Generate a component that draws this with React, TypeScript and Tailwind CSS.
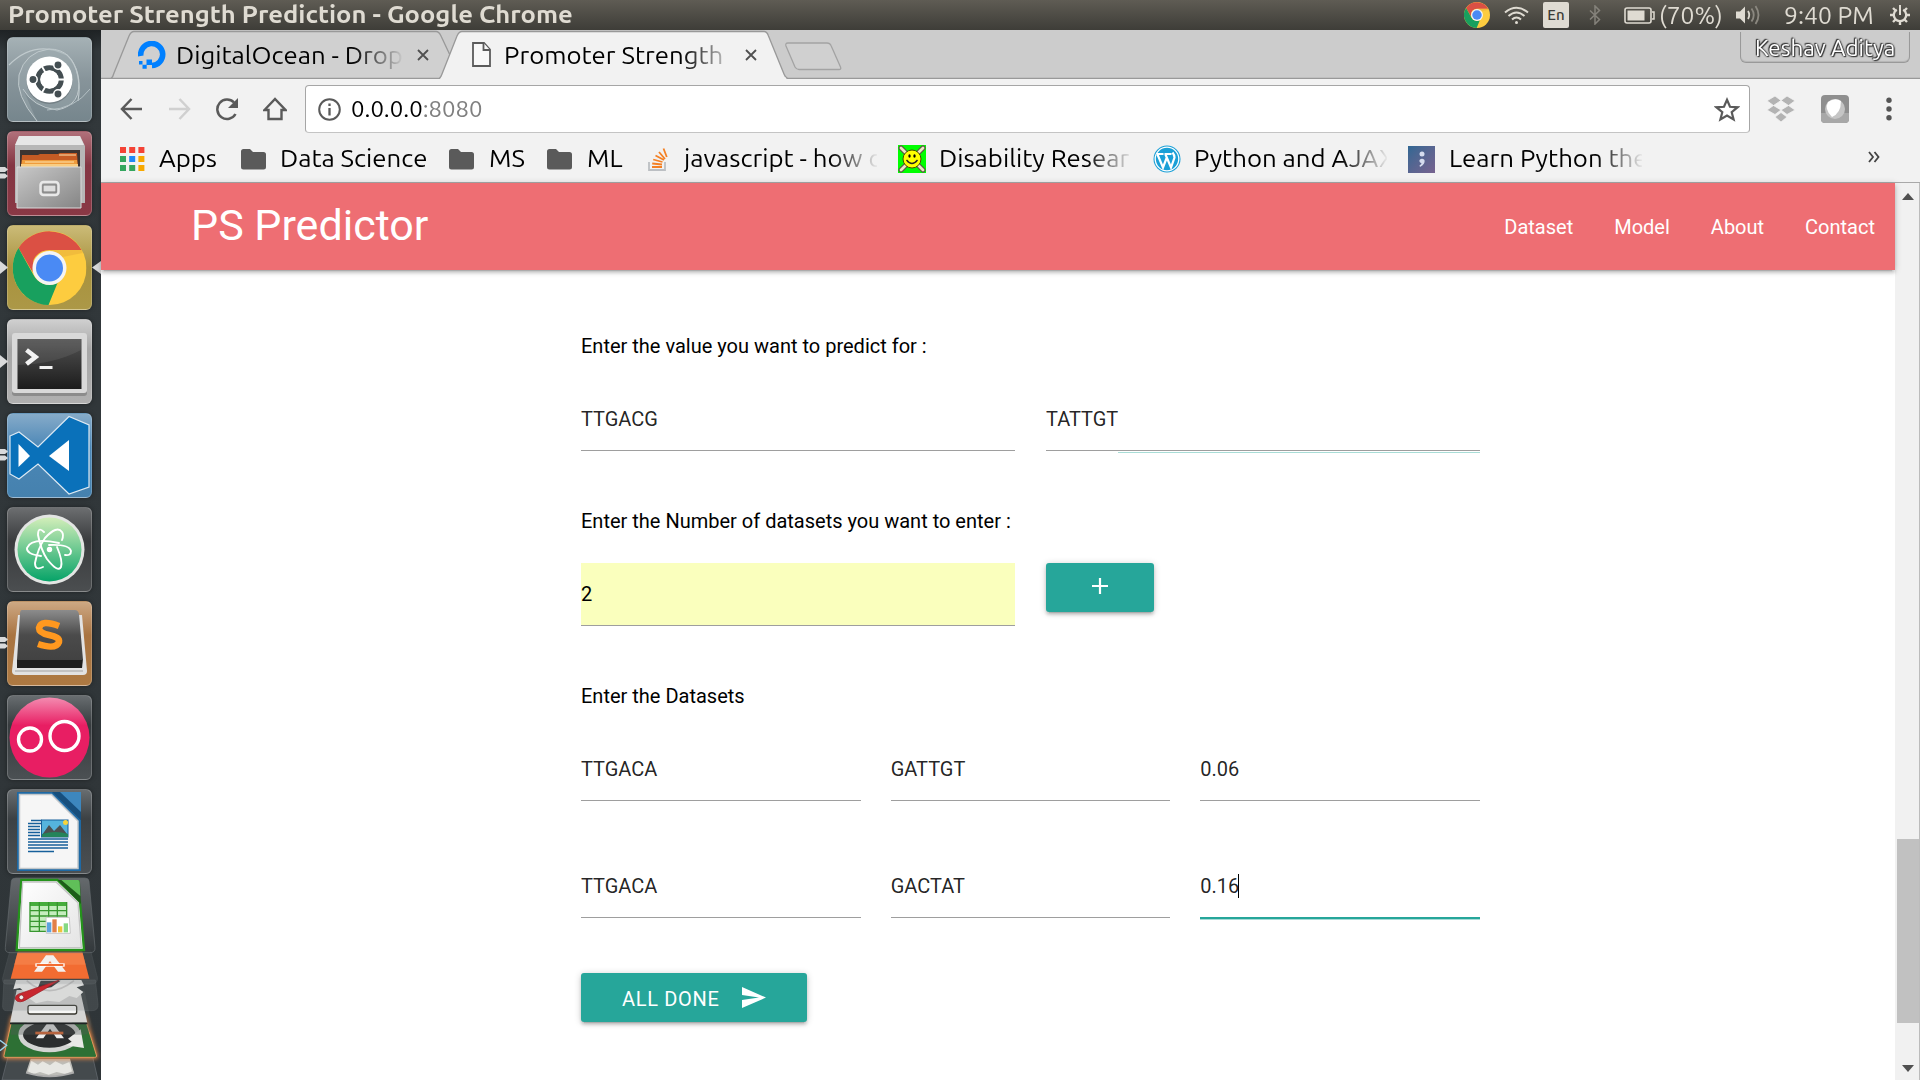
import React from "react";

const UI = "font-['Ubuntu','Noto_Sans',sans-serif]";

function Label({ children, className = "" }: { children: React.ReactNode; className?: string }) {
  return (
    <span className={`block w-max origin-left whitespace-nowrap text-black ${className}`}>{children}</span>
  );
}

function ChromeMark({ size, className = "" }: { size: number; className?: string }) {
  return (
    <svg width={size} height={size} viewBox="0 0 74 74" className={className}>
      <circle cx="37" cy="37" r="37" fill="#fdcc3f" />
      <path d="M6 17A37 37 0 0 1 69 19H37a18 18 0 0 0-16 10l-1 12Z" fill="#db5044" />
      <path d="M6 17 21 44a18 18 0 0 0 24 8L36 74A37 37 0 0 1 6 17Z" fill="#18a05e" />
      <path d="M37 19h32l1 3-20 4Z" fill="#e9b13a" opacity=".6" />
      <circle cx="37" cy="37" r="17" fill="#f4f4f4" />
      <circle cx="37" cy="37" r="13.5" fill="#4a8af4" />
    </svg>
  );
}

/* ---------- Desktop panel ---------- */

function Tray() {
  return (
    <div className="flex h-full items-center text-[#dfdbd2]">
      <ChromeMark size={26} />
      <svg width="25" height="19" viewBox="0 0 25 19" className="ml-[14px]" fill="none" stroke="#dfdbd2" strokeWidth="2">
        <path d="M1 6.500Q12.500-3 24 6.500M4.500 10Q12.500 3 20.500 10M8 13.500Q12.500 9.500 17 13.500" />
        <circle cx="12.500" cy="16.500" r="1.500" fill="#dfdbd2" stroke="none" />
      </svg>
      <span className="ml-[14px] flex h-[26px] w-[26px] items-center justify-center rounded-[2px] bg-[#dfdbd2] text-[15px] font-medium text-[#3c3b37]">
        En
      </span>
      <svg width="12" height="20" viewBox="0 0 12 20" className="ml-[20px]" fill="none" stroke="#85827b" strokeWidth="1.500">
        <path d="M1 5.500 10.500 14.500 6 19V1L10.500 5.500 1 14.500" />
      </svg>
      <svg width="31" height="17" viewBox="0 0 31 17" className="ml-[23px]">
        <rect x="1" y="1" width="26" height="15" rx="2" fill="none" stroke="#dfdbd2" strokeWidth="1.600" />
        <rect x="3.500" y="3.500" width="17" height="10" fill="#dfdbd2" />
        <path d="M28 5h2v7h-2" fill="none" stroke="#dfdbd2" strokeWidth="1.500" />
      </svg>
      <span className="ml-[4px] block w-[77px]">
        <span className="block w-max origin-left scale-x-[1.045] whitespace-nowrap text-[23.500px] leading-[30px]">(70%)</span>
      </span>
      <svg width="25" height="20" viewBox="0 0 25 20" fill="none" strokeWidth="1.800">
        <path d="M0 6.500h4l5-5v17l-5-5H0Z" fill="#dfdbd2" />
        <path d="M12 6q2.500 4 0 8" stroke="#dfdbd2" />
        <path d="M15.500 3.500q4.500 6.500 0 13M19.500 1q6 9 0 18" stroke="#8b8880" />
      </svg>
      <span className="ml-[23px] block w-[106px]">
        <span className="block w-max origin-left scale-x-[1.05] whitespace-nowrap text-[23.500px] leading-[30px]">9:40 PM</span>
      </span>
      <svg width="20" height="20" viewBox="0 0 20 20" className="mr-[10px]" fill="none" stroke="#dfdbd2">
        <path d="M6.800 4.700A6.200 6.200 0 1 0 13.200 4.700" strokeWidth="2.200" />
        <path d="M10 0v10" strokeWidth="2" />
        <path d="M3 3l2.500 2.500M17 3l-2.500 2.500M0 10h4M20 10h-4M3 17l2.500-2.500M17 17l-2.500-2.500M10 20v-4" strokeWidth="2.400" />
      </svg>
    </div>
  );
}

function Panel() {
  return (
    <header className={`flex h-[30px] shrink-0 items-center justify-between bg-linear-to-b from-[#5f5c54] to-[#3e3d38] ${UI}`}>
      <div className="pl-2">
        <span className="block w-max origin-left scale-x-[1.065] whitespace-nowrap text-[24px] leading-[30px] font-bold text-[#dfdbd2]">
          Promoter Strength Prediction - Google Chrome
        </span>
      </div>
      <Tray />
    </header>
  );
}

/* ---------- Launcher ---------- */

function Tile({ tint, pips = 0, active = false, children }: { tint: string; pips?: number; active?: boolean; children: React.ReactNode }) {
  return (
    <div className="relative flex h-[85px] w-[101px] shrink-0 pl-[7px]">
      {pips === 1 && (
        <svg className="absolute top-[36px] left-0" width="8" height="13" viewBox="0 0 8 13">
          <path d="M0 0v13l8-6.500Z" fill="#d9dadb" />
        </svg>
      )}
      {pips === 2 && (
        <svg className="absolute top-[36px] left-0" width="8" height="12" viewBox="0 0 8 12">
          <path d="M0 0h5l3 2.500L5 5H0ZM0 6.500h5L8 9l-3 2.500H0Z" fill="#d9dadb" />
        </svg>
      )}
      {active && (
        <svg className="absolute top-[36px] right-0" width="9" height="13" viewBox="0 0 9 13">
          <path d="M9 0v13L0 6.500Z" fill="#d9dadb" />
        </svg>
      )}
      <div className={`h-[85px] w-[85px] overflow-hidden rounded-[6px] border border-white/20 shadow-[0_0_5px_rgba(0,0,0,0.4)] ${tint}`}>
        <svg width="83" height="83" viewBox="1 1 83 83">{children}</svg>
      </div>
    </div>
  );
}

function FoldedTiles() {
  return (
    <svg width="101" height="203" viewBox="0 51 303 609" className="mt-[-6px] shrink-0">
      <defs>
        <linearGradient id="glass" x1="0" y1="0" x2="0" y2="1">
          <stop offset="0" stopColor="#777b7e" />
          <stop offset="1" stopColor="#34393c" />
        </linearGradient>
        <linearGradient id="sheet" x1="0" y1="0" x2="1" y2="1">
          <stop offset="0" stopColor="#fff" />
          <stop offset="1" stopColor="#e4e4e4" />
        </linearGradient>
        <filter id="glow" x="-20%" y="-40%" width="140%" height="180%">
          <feGaussianBlur stdDeviation="6" />
        </filter>
      </defs>
      <path d="M24 590 6 660H294L278 590Z" fill="#444a4d" stroke="#697075" strokeWidth="2" />
      <path d="M92 596h118l12 42q-70 22-144 0Z" fill="#bdbdb8" />
      <path d="M94 602l20 12 14-10 22 12 16-12 22 10 20-8 8 28-20 8-26-6-24 8-26-8-20 6-16-8Z" fill="#e7e7e3" />
      <path d="M78 638q70 22 144 0" stroke="#aaa" strokeWidth="5" fill="none" />
      <path d="M34 468h224l36 122q0 6-8 6H14q-6 0-6-6Z" fill="#f08b45" filter="url(#glow)" />
      <path d="M36 478h220l34 110q0 4-6 4H16q-6 0-4-6Z" fill="#2d7034" stroke="#e0955d" strokeWidth="3" />
      <ellipse cx="148" cy="524" rx="86" ry="46" fill="#2b2d2e" stroke="#d3d4d2" strokeWidth="14" />
      <path d="M242 508l10 56-54-8 18-10-12-10Z" fill="#e8e8e6" />
      <path d="M108 535 140 492h20l32 43h-22l-20-29-20 29Z" fill="#eee" />
      <path d="M106 515h84v8h-84Z" fill="#ed6a32" />
      <path d="M0 541 20 556 0 572" stroke="#9cd4ee" strokeWidth="4" fill="none" />
      <path d="M42 392h212l20 98q2 34-24 34H32Z" fill="#54585a" opacity=".35" />
      <path d="M50 390h190l22 98H30Z" fill="#d5d5d4" />
      <rect x="84" y="436" width="146" height="26" rx="6" fill="#f8f8f7" stroke="#37362f" strokeWidth="4" />
      <path d="M30 490h232" stroke="#202324" strokeWidth="5" />
      <path d="M12 360h274l8 72q2 20-18 20H20q-14 0-12-18Z" fill="#777d80" opacity=".25" stroke="#a5abae" strokeWidth="2" />
      <path d="M48 360h196l8 16-22 6 20 14-20 18-22-6-30 18-36-4-34 8-22-16-24 2 12-20-14-12-20 4Z" fill="#d9dad9" />
      <path d="M80 362q66 60 142 0" fill="none" stroke="#bbb" strokeWidth="5" />
      <path d="M122 362h60l-28 20-42 6Z" fill="#3c3f41" />
      <path d="M56 402 178 360 140 384 84 416q-28 18-38 2-2-10 10-16Z" fill="#c8272f" stroke="#9b1b22" strokeWidth="2" />
      <circle cx="64" cy="412" r="7" fill="#eee" stroke="#81151b" strokeWidth="2" />
      <path d="M30 272h242l20 80q2 20-18 20H20q-14 0-12-18Z" fill="#74797c" opacity=".2" stroke="#a5abae" strokeWidth="2" />
      <path d="M54 272h192l22 84H32Z" fill="#f26c32" />
      <path d="M54 272h192l11 42H43Z" fill="#f5854d" opacity=".7" />
      <path d="M102 335 138 286h22l38 49h-24l-24-32-24 32Z" fill="#f3efed" />
      <path d="M106 310h88v10h-88Z" fill="#fff" />
      <path d="M110 312h80v6h-80Z" fill="#f26c32" />
      <path d="M48 54h206q12 0 13 10l18 198q1 16-15 16H30q-16 0-14-16L34 64q1-10 14-10Z" fill="url(#glass)" opacity=".75" stroke="#777d80" strokeWidth="2" />
      <path d="M64 60h108l68 66 12 144H50Z" fill="#fafafa" stroke="#25931c" strokeWidth="7" />
      <path d="M68 66h100l66 62 10 135H58Z" fill="url(#sheet)" stroke="#c4c4c4" strokeWidth="4" />
      <path d="M172 60h62q6 0 6 6l3 66Z" fill="#1d5d19" />
      <path d="M184 60h50q5 0 5 6l2 42Z" fill="#60bf59" />
      <path d="M90 126h110v88H88Z" fill="#c5edbe" />
      <path d="M90 126h110v12H90Z" fill="#45ad3b" />
      <path d="M90 126v88M118 126v88M146 126v88M172 126v60M200 126v50M88 152h112M88 168h112M88 184h112M88 200h60M88 214h60" stroke="#37962f" strokeWidth="4" />
      <path d="M138 172h70l3 48h-72Z" fill="#fff" stroke="#c7c7c7" strokeWidth="3" />
      <path d="M141 187h13v30h-13Z" fill="#5ba4df" />
      <path d="M157 178h13v39h-13Z" fill="#e28048" />
      <path d="M174 199h13v18h-13Z" fill="#efc23a" />
      <path d="M191 190h13v27h-13Z" fill="#84d883" />
    </svg>
  );
}

function Launcher() {
  return (
    <aside className="flex w-[101px] shrink-0 flex-col gap-[9px] overflow-hidden bg-linear-to-b from-[#1e2224] via-[#32383b] via-[2%] to-[#2f3538] pt-[7px]">
      <Tile tint="bg-linear-to-b from-[#a5b1b5] via-[#87949a] to-[#76868d]">
        <path d="M2 28Q28 2 60 18 76 34 71 64" fill="none" stroke="#c0cacd" strokeWidth="1.200" />
        <path d="M30 84Q8 58 12 38 18 15 42 12 66 12 71 40 Q76 68 50 73 26 70 16 52" fill="#a0acb1" fillOpacity=".45" stroke="#c0cacd" strokeWidth="1" />
        <path d="M40 73Q68 72 83 52" fill="none" stroke="#b4c0c4" strokeWidth="1" />
        <circle cx="42.500" cy="44" r="23" fill="#59646a" opacity=".5" />
        <circle cx="42.500" cy="42.500" r="23" fill="#fff" />
        <circle cx="42.500" cy="42.500" r="11.800" fill="none" stroke="#444e52" strokeWidth="5" />
        <path d="M42.500 42.500H60M42.500 42.500 33.500 27M42.500 42.500 33.500 58" stroke="#fff" strokeWidth="1.800" />
        <circle cx="42.500" cy="42.500" r="9" fill="#fff" />
        <g fill="#444e52" stroke="#fff" strokeWidth="1.500">
          <circle cx="26" cy="42.500" r="4.200" />
          <circle cx="51" cy="28" r="4.200" />
          <circle cx="51" cy="57" r="4.200" />
        </g>
      </Tile>
      <Tile tint="bg-linear-to-b from-[#b0707a] via-[#843643] via-[40%] to-[#8a3845]" pips={2}>
        <defs>
          <linearGradient id="cab" x1="0" y1="0" x2="1" y2="1">
            <stop offset="0" stopColor="#c8c8c8" />
            <stop offset="1" stopColor="#858585" />
          </linearGradient>
        </defs>
        <path d="M12 5h61l5 10v57H8V15Z" fill="#b7b7b7" />
        <path d="M12 5h61l4 9H8Z" fill="#e7e7e7" />
        <path d="M13 19h60v20H13Z" fill="#3c3431" />
        <path d="M15 24h16l2-1h18l2-1h17l1 15H14Z" fill="#c55b24" />
        <path d="M15 29h55l1 10H14Z" fill="#ef9c3c" />
        <path d="M14 33h57v6H14Z" fill="#f8cd83" />
        <path d="M18 31h49M52 24h17" stroke="#ffe3ae" strokeWidth="1.200" />
        <path d="M10 36h64v41H10Z" fill="url(#cab)" stroke="#dadada" strokeWidth="1" />
        <rect x="33.500" y="51" width="18" height="13" rx="3" fill="none" stroke="#e9e9e9" strokeWidth="2.500" />
        <rect x="36" y="54" width="13" height="7" fill="#dedede" stroke="#777" />
      </Tile>
      <Tile tint="bg-linear-to-b from-[#cbbb77] via-[#a8923d] via-[50%] to-[#ac9847]" pips={1} active>
        <g transform="translate(5.500 6)">
          <ChromeMark size={74} />
        </g>
      </Tile>
      <Tile tint="bg-linear-to-b from-[#cfcfcf] via-[#a6a6a6] via-[35%] to-[#b0b0b0]" pips={1}>
        <defs>
          <linearGradient id="crt" x1="0" y1="0" x2="0" y2="1">
            <stop offset="0" stopColor="#525252" />
            <stop offset="1" stopColor="#1c1c1c" />
          </linearGradient>
        </defs>
        <rect x="5" y="16" width="75" height="61" rx="3" fill="#8c8c8c" />
        <rect x="5" y="14" width="75" height="60" rx="3" fill="#d9d9d9" />
        <rect x="10.500" y="20" width="64" height="50" fill="url(#crt)" />
        <path d="M11 20h63v11Q48 45 11 46Z" fill="#fff" opacity=".08" />
        <path d="M19.500 31 28.500 38 19.500 45" fill="none" stroke="#f2f2f2" strokeWidth="4.600" />
        <path d="M32.500 48.500h13" stroke="#f2f2f2" strokeWidth="3" />
      </Tile>
      <Tile tint="bg-linear-to-b from-[#86abc9] via-[#4b87b6] via-[40%] to-[#4581ae]" pips={2}>
        <path d="M3 23 12 19 31 34 62 3.500 82 12v62L62 81 31 51 12 66 3 61Z" fill="#0a71ba" stroke="#dce9f3" strokeWidth="1.200" />
        <path d="M11.500 31v23L23 43Z" fill="#fff" />
        <path d="M62 27v31L42 43Z" fill="#fff" />
      </Tile>
      <Tile tint="bg-linear-to-b from-[#6c6e70] via-[#3a3c3e] via-[40%] to-[#4b4e50]">
        <defs>
          <linearGradient id="atom" x1="0" y1="0" x2="0" y2="1">
            <stop offset="0" stopColor="#d2eeb9" />
            <stop offset="1" stopColor="#06a368" />
          </linearGradient>
        </defs>
        <circle cx="42.500" cy="42.500" r="35" fill="#e3e5e3" />
        <circle cx="42.500" cy="42.500" r="32" fill="url(#atom)" />
        <g fill="none" stroke="#fff" strokeWidth="1.900" strokeLinecap="round">
          <path d="M42 38Q62 37 64 44 64 49 58 48M52 36Q24 30 20 41 19 47 34 49" />
          <path d="M37 25Q31 19 31 28 34 43 40 52 51 66 54 60 56 54 50 40" />
          <path d="M36 60Q28 64 28 56 31 41 38 31 50 18 55 25 57 28 55 33" />
        </g>
        <circle cx="42.500" cy="42.500" r="2.700" fill="#fff" />
      </Tile>
      <Tile tint="bg-linear-to-b from-[#cda883] via-[#a97441] via-[40%] to-[#ad7942]" pips={2}>
        <defs>
          <linearGradient id="key" x1="0" y1="0" x2="0" y2="1">
            <stop offset="0" stopColor="#8c8c8c" />
            <stop offset=".5" stopColor="#4b4b4b" />
            <stop offset="1" stopColor="#424242" />
          </linearGradient>
        </defs>
        <path d="M11 14h64l5 56q0 4-4 4H9q-4 0-4-4Z" fill="#e2e2e2" />
        <path d="M8 70h68" stroke="#c2c2c2" strokeWidth="2" />
        <path d="M10 58h66l-1 9H10Z" fill="#1e1e1e" />
        <path d="M15 9h53q3 0 4 4l4 46H10l3-46q0-4 2-4Z" fill="url(#key)" />
        <path d="M52 25Q34 18 32 27 32 32 42 34 53 36 52 41 49 49 31 43" stroke="#ff981f" strokeWidth="6.500" fill="none" />
      </Tile>
      <Tile tint="bg-linear-to-b from-[#686d70] via-[#373c3f] via-[35%] to-[#4b5053]">
        <defs>
          <linearGradient id="pink" x1="0" y1="0" x2="0" y2="1">
            <stop offset="0" stopColor="#f48bb0" />
            <stop offset=".35" stopColor="#e81e63" />
          </linearGradient>
        </defs>
        <circle cx="42.500" cy="42.500" r="40" fill="url(#pink)" />
        <circle cx="23" cy="44.500" r="11.500" fill="none" stroke="#fff" strokeWidth="3.400" />
        <circle cx="57.500" cy="41" r="14.500" fill="none" stroke="#fff" strokeWidth="3.400" />
      </Tile>
      <Tile tint="bg-linear-to-b from-[#686d70] via-[#3c4144] via-[35%] to-[#4b5053]">
        <path d="M10 3h36l28 28v51H10Z" fill="#1e69a4" />
        <path d="M12.500 5.500h32L71 32v47.500H12.500Z" fill="#f6f6f6" stroke="#c2c7ca" strokeWidth="1.500" />
        <path d="M45 3 74 31V3Z" fill="#174f7d" />
        <path d="M53 3h21v20Z" fill="#3d87be" />
        <path d="M24 31.500h11M21 34.500h14M21 37.500h12M21 40.500h12M21 43.500h12M21 46.500h12M21 50h40M21 53h40M21 56h40M21 59h40M21 62.500h26" stroke="#17609b" strokeWidth="1.700" />
        <rect x="34.500" y="31" width="26.500" height="17" fill="#55b4dd" stroke="#17609b" />
        <path d="M35 46 42 36 47 42 53 36 60 45v2H35Z" fill="#4c5151" />
        <path d="M35 45q14-4 26 0v3H35Z" fill="#24845a" />
        <circle cx="58.500" cy="33.500" r="2.500" fill="#f7d43b" />
      </Tile>
      <FoldedTiles />
    </aside>
  );
}

/* ---------- Browser chrome ---------- */

function CloseGlyph({ className = "" }: { className?: string }) {
  return (
    <svg width="12" height="12" viewBox="0 0 12 12" className={`shrink-0 ${className}`} stroke="#505050" strokeWidth="1.800">
      <path d="M1 1 11 11M11 1 1 11" />
    </svg>
  );
}

function TabStrip() {
  return (
    <div className="relative flex h-[49px] shrink-0 items-start bg-[#ccc]">
      <svg className="absolute inset-0" width="1819" height="49" viewBox="101 30 1819 49" strokeWidth="1.300">
        <path d="M101 78.500H1920" stroke="#999" />
        <path d="M111 78.500Q113 77 114 73L129 36Q131 31.500 134 31.500H436Q439 31.500 441 36L461 78.500Z" fill="#d0d0d0" stroke="#999" />
        <path d="M439 79Q441 77 442 74L457 36Q459 31.500 462 31.500H764Q767 31.500 768.500 36L784 74Q785 77 788 79" fill="#f2f2f2" stroke="#999" />
        <path d="M441 78.600H786" stroke="#f2f2f2" strokeWidth="2" />
        <path d="M788 43H827Q830 43 831 45.500L840.500 67Q841.500 69.500 839 69.500H799Q796.500 69.500 795 67L786 46Q785 43 788 43Z" fill="#d0d0d0" stroke="#a3a3a3" />
      </svg>
      <div className="relative flex h-full w-[338px] items-center pl-[37px]">
        <svg width="28" height="28" viewBox="0 0 28 28" className="shrink-0" fill="none">
          <path d="M2.800 15A11 11 0 1 1 14 24.500" stroke="#0080ff" strokeWidth="5.600" />
          <path d="M8.500 18.500h5.500v5.500H8.500ZM4.500 23.800h4.200v4H4.500ZM1 20h3.500v3.500H1Z" fill="#0080ff" />
        </svg>
        <div className="ml-[10px] w-[226px] [mask-image:linear-gradient(to_right,#000_78%,transparent_101%)]">
          <Label className="scale-x-[1.03] text-[25px] leading-[36px]">DigitalOcean - Drop</Label>
        </div>
        <CloseGlyph className="ml-[15px]" />
      </div>
      <div className="relative flex h-full w-[349px] items-center pl-[33px]">
        <svg width="19" height="25" viewBox="0 0 19 25" className="shrink-0" fill="#f8f8f8" stroke="#5b5b5b" strokeWidth="1.800">
          <path d="M1 1h11l6 6.500V24H1Z" />
          <path d="M11.500 1v7H18" />
        </svg>
        <div className="ml-[13px] w-[222px] [mask-image:linear-gradient(to_right,#000_80%,rgba(0,0,0,0.2))]">
          <Label className="scale-x-[1.03] text-[25px] leading-[36px]">Promoter Strength</Label>
        </div>
        <CloseGlyph className="ml-[19px]" />
      </div>
      <div className="relative mt-[2px] mr-[10px] ml-auto flex h-[31px] w-[170px] items-center overflow-visible rounded-b-[6px] border border-t-0 border-[#999] pl-[14px] shadow-[inset_0_-1px_1px_#b5b5b5]">
        <span className="block w-max origin-left scale-x-[1.02] pt-[2px] text-[22px] leading-[30px] whitespace-nowrap text-white [text-shadow:0_0_2px_#333,0_0_2px_#333,1px_1px_1px_#333,-1px_-1px_1px_#333]">
          Keshav Aditya
        </span>
      </div>
    </div>
  );
}

function Toolbar() {
  return (
    <div className="flex h-[61px] shrink-0 items-center pb-px">
      <div className="flex w-[204px] items-center pl-[19px]">
        <svg width="22" height="22" viewBox="0 0 22 22" fill="none" stroke="#5a5a5a" strokeWidth="2.500">
          <path d="M22 11H2M11.500 1 2 11 11.500 21" />
        </svg>
        <svg width="22" height="22" viewBox="0 0 22 22" className="ml-[27px]" fill="none" stroke="#d0d0d0" strokeWidth="2.500">
          <path d="M0 11H20M10.500 1 20 11 10.500 21" />
        </svg>
        <svg width="24" height="24" viewBox="0 0 24 24" className="ml-[24px]" fill="none">
          <path d="M20.500 17A9.700 9.700 0 1 1 19 5.500" stroke="#5a5a5a" strokeWidth="2.500" />
          <path d="M23 1v10H13Z" fill="#5a5a5a" />
        </svg>
        <svg width="24" height="24" viewBox="0 0 24 24" className="ml-[24px]" fill="none" stroke="#5a5a5a" strokeWidth="2.400">
          <path d="M1.500 13 12 2 22.500 13H18.500V22H5.500V13Z" />
        </svg>
      </div>
      <div className="flex h-[48px] w-[1445px] items-center rounded-[4px] border border-[#a6a6a6] border-b-[#c4c4c4] bg-white pl-[12px]">
        <svg width="23" height="23" viewBox="0 0 23 23" fill="none" stroke="#5a5a5a" strokeWidth="2">
          <circle cx="11.500" cy="11.500" r="10.300" />
          <path d="M11.500 10v7.500M11.500 5.500v2.600" strokeWidth="2.300" />
        </svg>
        <Label className="ml-[10px] scale-x-[1.04] text-[23px] leading-[40px]">
          0.0.0.0<span className="text-[#808080]">:8080</span>
        </Label>
        <svg width="26" height="25" viewBox="0 0 26 25" className="mr-[9px] ml-auto" fill="none" stroke="#5a5a5a" strokeWidth="2.200">
          <path d="M13 2.800 16 9.800 23.500 10.300 17.700 15.200 19.600 22.500 13 18.500 6.400 22.500 8.300 15.200 2.500 10.300 10 9.800Z" />
        </svg>
      </div>
      <svg width="28" height="26" viewBox="0 0 28 26" className="ml-[17px]" fill="#b3b3b3">
        <path d="M8 0 14 4.500 6.500 9.500 0 4.800ZM20 0 28 4.800 21.500 9.500 14 4.500ZM0 14 6.500 9.500 14 14 8 18.500ZM21.500 9.500 28 14 20 18.500 14 14ZM14 16.500 20 21 14 26 8 21Z" stroke="#f2f2f2" strokeWidth=".8" />
      </svg>
      <svg width="28" height="28" viewBox="0 0 28 28" className="ml-[26px]">
        <rect width="28" height="28" rx="4" fill="#8f8f8f" />
        <path d="M0 18h28v6q0 4-4 4H4q-4 0-4-4Z" fill="#a8a8a8" />
        <circle cx="14" cy="14" r="10" fill="#c5c5c5" />
        <path d="M7 7Q14 2 20 6 20 18 11 22 3 14 7 7Z" fill="#fff" />
      </svg>
      <svg width="6" height="24" viewBox="0 0 6 24" className="ml-[37px]" fill="#555">
        <circle cx="3" cy="3.300" r="2.700" />
        <circle cx="3" cy="12" r="2.700" />
        <circle cx="3" cy="20.700" r="2.700" />
      </svg>
    </div>
  );
}

function Folder() {
  return (
    <svg width="25" height="21" viewBox="0 0 25 21" fill="#5a5a5a">
      <path d="M2.500 0H9l3 3h10.500Q25 3 25 5.500V18q0 2.500-2.500 2.500h-20Q0 20.500 0 18V2.500Q0 0 2.500 0Z" />
    </svg>
  );
}

function Bookmark({ icon, text, width, gap, fade }: { icon: React.ReactNode; text: string; width: string; gap: string; fade?: boolean }) {
  return (
    <div className={`flex shrink-0 items-center ${width}`}>
      <div className={`flex shrink-0 items-center ${gap}`}>{icon}</div>
      <div className={fade ? "w-[193px] pb-[2px] [mask-image:linear-gradient(to_right,#000_76%,transparent_101%)]" : "pb-[2px]"}>
        <Label className="scale-x-[1.03] text-[25px] leading-[36px]">{text}</Label>
      </div>
    </div>
  );
}

function BookmarksBar() {
  return (
    <div className="flex h-[43px] shrink-0 items-start border-b border-[#a9a9a9] pl-[19px]">
      <Bookmark
        text="Apps"
        width="w-[121px]"
        gap="w-[39px]"
        icon={
          <svg width="25" height="24" viewBox="0 0 25 24">
            <path d="M0 0h6v6H0ZM9.200 0h6v6h-6ZM18.400 0h6v6h-6Z" fill="#f44336" />
            <path d="M0 9h6v6H0ZM0 18h6v6H0ZM9.200 18h6v6h-6Z" fill="#34a65f" />
            <path d="M9.200 9h6v6h-6Z" fill="#1e88f7" />
            <path d="M18.400 9h6v6h-6ZM18.400 18h6v6h-6Z" fill="#f7a800" />
          </svg>
        }
      />
      <Bookmark text="Data Science" width="w-[208px]" gap="w-[39px]" icon={<Folder />} />
      <Bookmark text="MS" width="w-[98px]" gap="w-[40px]" icon={<Folder />} />
      <Bookmark text="ML" width="w-[101px]" gap="w-[40px]" icon={<Folder />} />
      <Bookmark
        text="javascript - how c"
        width="w-[250px]"
        gap="w-[36px]"
        fade
        icon={
          <svg width="20" height="23" viewBox="0 0 20 23" fill="none">
            <path d="M1 14v8h16v-8" stroke="#bcbfc3" strokeWidth="1.800" />
            <path d="M4 19h10M4.200 15.500 14 16.500M5.200 11.500 14.500 14M7.500 7.500 16 12M11 4l6 7M15.500.5 18.800 9" stroke="#f48024" strokeWidth="1.800" />
          </svg>
        }
      />
      <Bookmark
        text="Disability Resear"
        width="w-[255px]"
        gap="w-[41px]"
        fade
        icon={
          <svg width="28" height="28" viewBox="0 0 28 28">
            <path d="M0 0h28v28H0Z" fill="#0f0" />
            <path d="M3 3 25 25M25 3 3 25" stroke="#5b5543" strokeWidth="5" strokeLinecap="round" />
            <path d="M3 3 25 25M25 3 3 25" stroke="#ece4c4" strokeWidth="2.800" strokeLinecap="round" />
            <circle cx="14" cy="14" r="9" fill="#ff0" stroke="#4b4800" />
            <ellipse cx="11.500" cy="11" rx="1.200" ry="1.800" />
            <ellipse cx="16.500" cy="11" rx="1.200" ry="1.800" />
            <path d="M8.500 15Q14 22 19.500 15" fill="none" stroke="#222" strokeWidth="1.300" />
          </svg>
        }
      />
      <Bookmark
        text="Python and AJAX"
        width="w-[255px]"
        gap="w-[41px]"
        fade
        icon={
          <svg width="28" height="28" viewBox="0 0 28 28" fill="none">
            <circle cx="14" cy="14" r="13.500" fill="#1ba0d7" />
            <circle cx="14" cy="14" r="11.800" stroke="#fff" strokeWidth="1.300" />
            <path d="M4.500 9.500 10 22.500 14 12M4 9h6.500M11.500 9h7M12.500 9.500 18 22.500 21.500 12.500Q21.500 10 19.500 7.500" stroke="#fff" strokeWidth="2.200" />
          </svg>
        }
      />
      <Bookmark
        text="Learn Python the"
        width="w-[234px]"
        gap="w-[41px]"
        fade
        icon={
          <span className="flex h-[27px] w-[27px] items-center justify-center bg-linear-to-br from-[#2f6793] to-[#76628f]">
            <svg width="8" height="16" viewBox="0 0 8 16" fill="#d5dcee">
              <circle cx="4" cy="3" r="2.500" />
              <path d="M1.500 9Q4 6.500 6.500 9 7.500 13 2 16L1.500 14.500Q3.500 13 3.500 12 1 11.500 1.500 9Z" />
            </svg>
          </span>
        }
      />
      <svg width="12" height="12" viewBox="0 0 12 12" className="mt-[11px] mr-[40px] ml-auto" fill="none" stroke="#444" strokeWidth="1.800">
        <path d="M1 1 5 6 1 11M6.500 1l4 5-4 5" />
      </svg>
    </div>
  );
}

/* ---------- Page ---------- */

const RAISED = "shadow-[0_3px_3px_rgba(0,0,0,0.14),0_4px_1px_-3px_rgba(0,0,0,0.12),0_1px_7px_rgba(0,0,0,0.2)]";

function Navbar() {
  return (
    <nav className={`relative flex h-[87px] shrink-0 items-center justify-between bg-[#ee6e73] text-white ${RAISED}`}>
      <span className="pb-[4px] pl-[90px] text-[43px] leading-[80px]">PS Predictor</span>
      <div className="flex gap-[41px] pr-[20px] text-[20px]">
        <span>Dataset</span>
        <span>Model</span>
        <span>About</span>
        <span>Contact</span>
      </div>
    </nav>
  );
}

function Field({ value, tone = "border-b border-[#9e9e9e] text-black/87", caret }: { value: string; tone?: string; caret?: boolean }) {
  return (
    <div className={`relative flex h-[63px] flex-1 items-center text-[20px] ${tone}`}>
      <span className="whitespace-nowrap">{value}</span>
      {caret && <span className="-ml-px h-[24px] w-px bg-black" />}
    </div>
  );
}

function Prompt({ children }: { children: React.ReactNode }) {
  return <div className="mb-[27px] h-[30px] text-[20px] leading-[30px] text-black">{children}</div>;
}

function Page() {
  return (
    <main className="flex min-w-0 flex-1 flex-col bg-white font-['Roboto',sans-serif]">
      <Navbar />
      <div className="ml-[480px] flex w-[899px] flex-col pt-[61px]">
        <Prompt>Enter the value you want to predict for :</Prompt>
        <div className="mb-[55px] flex gap-[31px]">
          <Field value="TTGACG" />
          <div className="relative flex flex-1">
            <Field value="TATTGT" />
            <span className="absolute right-0 bottom-[-2px] left-[72px] h-px bg-[#a9ddd7]" />
          </div>
        </div>
        <Prompt>Enter the Number of datasets you want to enter :</Prompt>
        <div className="mb-[55px] flex gap-[31px]">
          <Field value="2" tone="border-b border-[#9e9e9e] bg-[#faffbd] text-black" />
          <div className="flex-1">
            <div className={`flex h-[49px] w-[108px] items-center justify-center rounded-[3px] bg-[#26a69a] pb-[3px] ${RAISED}`}>
              <svg width="16" height="16" viewBox="0 0 16 16" stroke="#fff" strokeWidth="2.200">
                <path d="M8 0v16M0 8h16" />
              </svg>
            </div>
          </div>
        </div>
        <Prompt>Enter the Datasets</Prompt>
        <div className="mb-[54px] flex gap-[30px]">
          <Field value="TTGACA" />
          <Field value="GATTGT" />
          <Field value="0.06" />
        </div>
        <div className="mb-[55px] flex gap-[30px]">
          <Field value="TTGACA" />
          <Field value="GACTAT" />
          <Field value="0.16" caret tone="border-b border-[#26a69a] text-black/87 shadow-[0_1px_0_0_#26a69a,0_2px_0_0_#a8dbd7]" />
        </div>
        <div className={`flex h-[49px] w-[226px] items-center rounded-[3px] bg-[#26a69a] pl-[41px] text-white ${RAISED}`}>
          <span className="w-[120px] pt-[2px] text-[20px] tracking-[0.680px] whitespace-nowrap">ALL DONE</span>
          <svg width="24" height="21" viewBox="0 0 24 21" fill="#fff">
            <path d="M0 0 24 10.500 0 21V13L17 10.500 0 8Z" />
          </svg>
        </div>
      </div>
    </main>
  );
}

function Scrollbar() {
  return (
    <div className="flex w-[25px] shrink-0 flex-col items-center border-r border-[#bcbcbc] bg-[#f1f1f1] pl-[2px]">
      <svg width="12" height="7" viewBox="0 0 12 7" className="mt-[10px]" fill="#505050">
        <path d="M6 0 12 7H0Z" />
      </svg>
      <div className="mt-[639px] h-[184px] w-[22px] bg-[#c1c1c1]" />
      <svg width="12" height="7" viewBox="0 0 12 7" className="mt-auto mb-[8px]" fill="#505050">
        <path d="M0 0H12L6 7Z" />
      </svg>
    </div>
  );
}

export default function App() {
  return (
    <div className="flex h-[1080px] w-[1920px] flex-col overflow-hidden bg-white">
      <Panel />
      <div className="flex min-h-0 flex-1">
        <Launcher />
        <div className="flex min-w-0 flex-1 flex-col">
          <div className={`flex flex-col bg-[#f2f2f2] ${UI}`}>
            <TabStrip />
            <Toolbar />
            <BookmarksBar />
          </div>
          <div className="flex min-h-0 flex-1">
            <Page />
            <Scrollbar />
          </div>
        </div>
      </div>
    </div>
  );
}
